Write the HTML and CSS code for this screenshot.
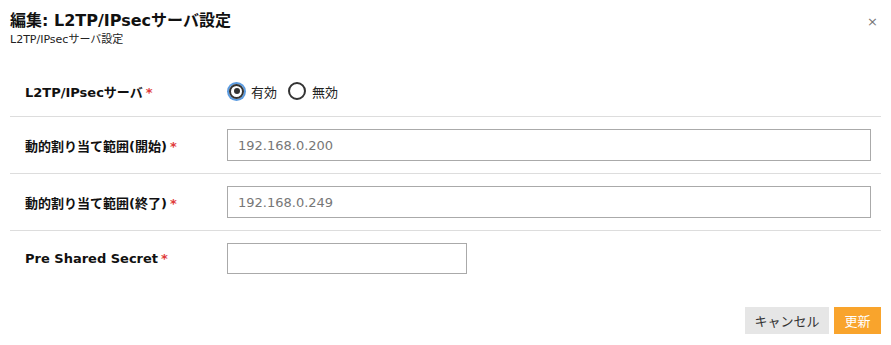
FILE: index.html
```html
<!DOCTYPE html>
<html lang="ja">
<head>
<meta charset="utf-8">
<link rel="stylesheet" href="styles.css">
</head>
<body>
<div class="dialog">
  <div class="header">
    <div class="titles">
      <h1 class="title">編集: L2TP/IPsecサーバ設定</h1>
      <div class="subtitle">L2TP/IPsecサーバ設定</div>
    </div>
    <span class="close">×</span>
  </div>
  <div class="form">
    <div class="row row-first">
      <div class="label">L2TP/IPsecサーバ<span class="req">*</span></div>
      <div class="field radios">
        <label class="radio"><span class="dot checked"></span>有効</label>
        <label class="radio"><span class="dot"></span>無効</label>
      </div>
    </div>
    <div class="row">
      <div class="label">動的割り当て範囲(開始)<span class="req">*</span></div>
      <div class="field"><div class="input wide">192.168.0.200</div></div>
    </div>
    <div class="row">
      <div class="label">動的割り当て範囲(終了)<span class="req">*</span></div>
      <div class="field"><div class="input wide">192.168.0.249</div></div>
    </div>
    <div class="row row-last">
      <div class="label">Pre Shared Secret<span class="req">*</span></div>
      <div class="field"><div class="input short"></div></div>
    </div>
  </div>
  <div class="footer">
    <button class="btn cancel">キャンセル</button>
    <button class="btn primary">更新</button>
  </div>
</div>
</body>
</html>
```
FILE: styles.css
```css
* { box-sizing: border-box; }
body {
  margin: 0;
  background: #fff;
  font-family: "DejaVu Sans", "Noto Sans CJK JP", sans-serif;
  color: #222;
}
.dialog { width: 891px; height: 345px; }
.header {
  display: flex;
  justify-content: space-between;
  padding: 10px 13px 0 10px;
}
.title {
  margin: 0;
  font-size: 16px;
  font-weight: bold;
  line-height: 22px;
  color: #111;
}
.subtitle {
  font-size: 11px;
  line-height: 16px;
  color: #222;
}
.close {
  font-size: 13px;
  line-height: 13px;
  color: #777;
  margin-top: 5px;
}
.form {
  margin: 18px 10px 0 10px;
}
.row {
  display: flex;
  align-items: center;
  padding: 12px 10px 12px 15px;
  border-bottom: 1px solid #ddd;
}
.row-first { height: 51px; padding-top: 0; padding-bottom: 0; }
.row-last { border-bottom: none; }
.label {
  width: 202px;
  font-size: 13px;
  font-weight: bold;
  color: #111;
}
.req { color: #e03a3a; margin-left: 3px; }
.field { flex: 1; }
.radios { display: flex; gap: 11px; font-size: 13px; }
.radio { display: flex; align-items: center; gap: 6px; }
.dot {
  width: 18px; height: 18px;
  border: 2px solid #333;
  border-radius: 50%;
  display: inline-block;
  position: relative;
}
.dot.checked {
  width: 15px; height: 15px;
  box-shadow: 0 0 0 2px #5b9be0;
  margin-left: 2px;
  margin-right: 1px;
}
.dot.checked::after {
  content: "";
  position: absolute;
  left: 2.5px; top: 2.5px;
  width: 6px; height: 6px;
  border-radius: 50%;
  background: #333;
}
.input {
  height: 32px;
  border: 1px solid #aaa;
  font-size: 13px;
  color: #777;
  padding: 0 10px;
  display: flex;
  align-items: center;
}
.input.short { width: 240px; height: 31px; }
.footer {
  display: flex;
  justify-content: flex-end;
  gap: 5px;
  padding: 21px 10px 0 0;
}
.btn {
  border: none;
  height: 27px;
  font-family: inherit;
  font-size: 13px;
  padding: 0;
  white-space: nowrap;
}
.cancel { background: #e6e6e6; color: #333; width: 84px; }
.primary { background: #f9a42c; color: #fff; width: 47px; }
```
